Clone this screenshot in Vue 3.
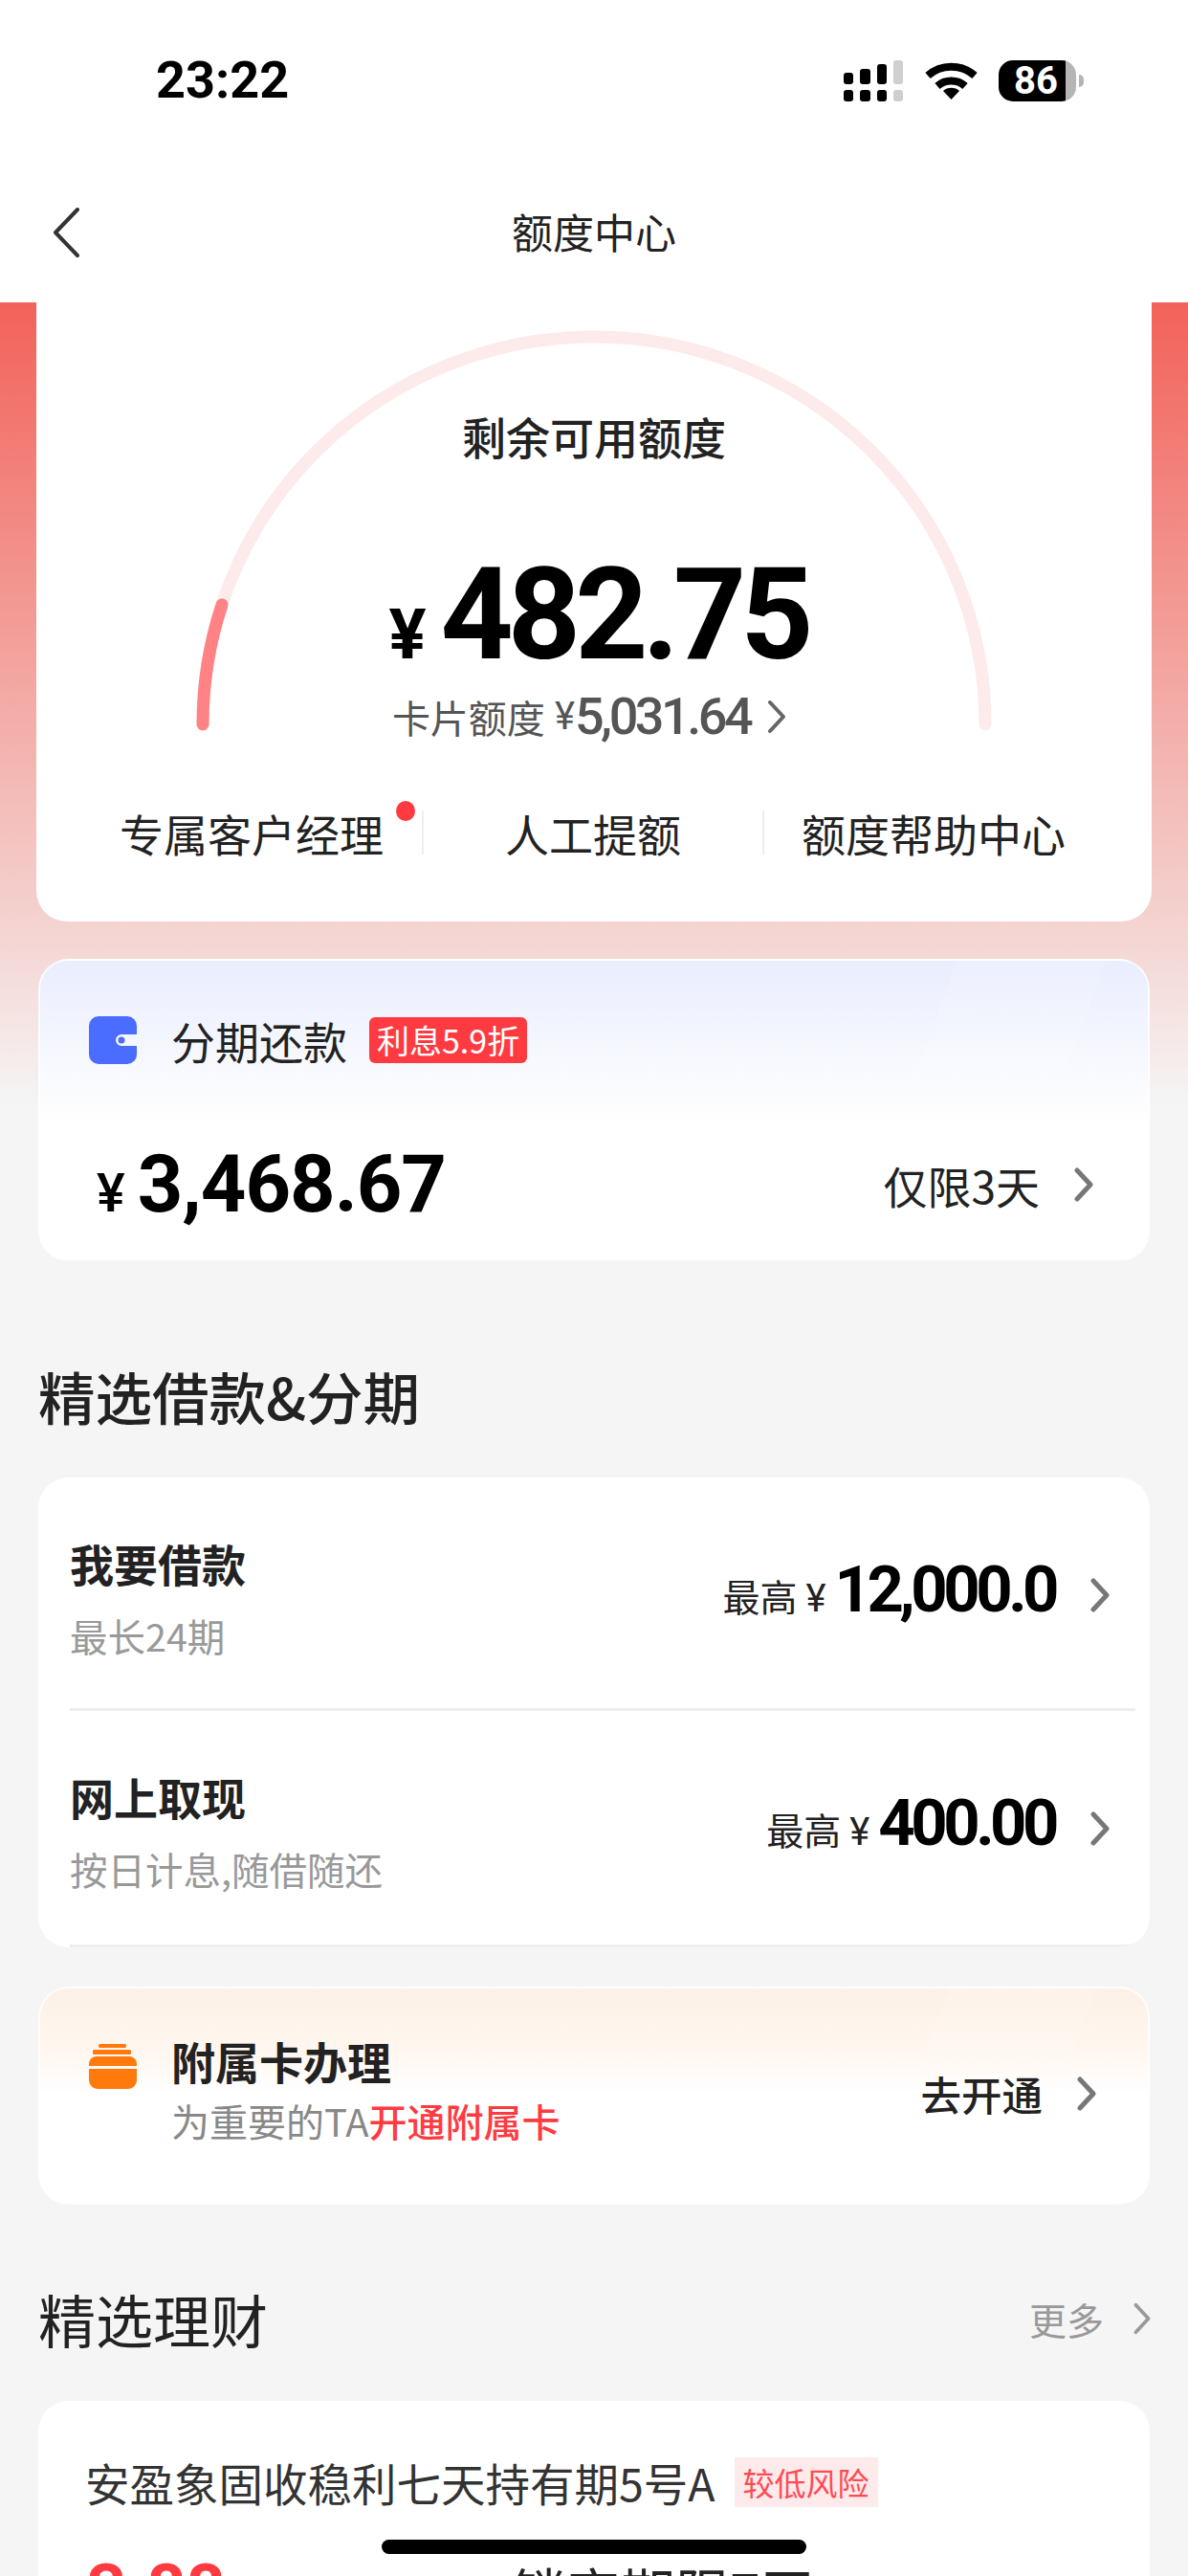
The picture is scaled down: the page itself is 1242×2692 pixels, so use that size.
<script setup>
const menu = [
  { label: '专属客户经理', dot: true },
  { label: '人工提额', dot: false },
  { label: '额度帮助中心', dot: false }
]
const loans = [
  { title: '我要借款', sub: '最长24期', amount: '12,000.0' },
  { title: '网上取现', sub: '按日计息,随借随还', amount: '400.00' }
]
</script>

<template>
  <div class="page">
    <header class="top">
      <div class="status">
        <span class="time">23:22</span>
        <div class="status-icons">
          <svg class="signal" viewBox="0 0 62 43">
            <rect x="0" y="13" width="10" height="12" rx="3" />
            <rect x="17" y="9" width="11" height="16" rx="3" />
            <rect x="35" y="4" width="10" height="21" rx="3" />
            <rect class="dim" x="52" y="0" width="10" height="25" rx="3" />
            <rect x="0" y="31" width="10" height="12" rx="3" />
            <rect x="17" y="31" width="11" height="12" rx="3" />
            <rect x="35" y="31" width="10" height="12" rx="3" />
            <rect class="dim" x="52" y="31" width="10" height="12" rx="3" />
          </svg>
          <svg class="wifi" viewBox="0 0 55 40">
            <path class="wave" d="M3 15 A37 37 0 0 1 52 15" />
            <path class="wave" d="M13 26 A22 22 0 0 1 42 26" />
            <path d="M19 31 A13 13 0 0 1 36 31 L27.5 40 Z" />
          </svg>
          <div class="battery"><span>86</span></div>
        </div>
      </div>
      <div class="nav">
        <svg class="back" viewBox="0 0 28 52"><path d="M26 2 L3 26 L26 50" /></svg>
        <h1>额度中心</h1>
      </div>
    </header>

    <main class="main">
      <section class="credit">
        <svg class="gauge" viewBox="0 0 1166 460">
          <path class="track" d="M174 441 A409 405 0 0 1 992 441" />
          <path class="progress" d="M174 441 A409 405 0 0 1 194 316" />
        </svg>
        <h2 class="credit-title">剩余可用额度</h2>
        <div class="credit-amount"><span class="yen">¥</span><span class="num">482.75</span></div>
        <div class="credit-limit">
          <span>卡片额度</span><span class="limit-yen">¥</span><span class="limit-num">5,031.64</span>
          <svg class="chev limit-chev" viewBox="0 0 20 36"><path d="M3 3 L17 18 L3 33" /></svg>
        </div>
        <nav class="menu">
          <div v-for="item in menu" :key="item.label" class="menu-item">
            <span class="menu-label">{{ item.label }}<i v-if="item.dot" class="dot"></i></span>
          </div>
        </nav>
      </section>

      <section class="promo promo-blue">
        <div class="promo-head">
          <svg class="promo-icon" viewBox="0 0 50 50">
            <path class="wallet" d="M10 0H40A10 10 0 0 1 50 10V19H34A6 6 0 0 0 34 31H50V40A10 10 0 0 1 40 50H10A10 10 0 0 1 0 40V10A10 10 0 0 1 10 0Z" />
            <circle class="wallet" cx="34" cy="25" r="3.5" />
          </svg>
          <span class="promo-name">分期还款</span>
          <span class="promo-tag">利息5.9折</span>
        </div>
        <div class="promo-foot">
          <div class="promo-amount"><span class="promo-yen">¥</span><span class="promo-num">3,468.67</span></div>
          <div class="promo-limit">
            <span>仅限3天</span>
            <svg class="chev row-chev" viewBox="0 0 20 36"><path d="M3 3 L17 18 L3 33" /></svg>
          </div>
        </div>
      </section>

      <h2 class="section-title section-bold">精选借款&amp;分期</h2>

      <section class="loans">
        <div v-for="loan in loans" :key="loan.title" class="loan">
          <div class="loan-text">
            <div class="loan-title">{{ loan.title }}</div>
            <div class="loan-sub">{{ loan.sub }}</div>
          </div>
          <div class="loan-right">
            <span class="loan-label">最高</span><span class="loan-yen">¥</span><span class="loan-num">{{ loan.amount }}</span>
            <svg class="chev row-chev loan-chev" viewBox="0 0 20 36"><path d="M3 3 L17 18 L3 33" /></svg>
          </div>
        </div>
      </section>

      <section class="promo promo-orange">
        <svg class="promo-icon jar" viewBox="0 0 50 47">
          <rect x="10" y="0" width="29" height="4" rx="1.5" />
          <rect x="4" y="6" width="40" height="5" rx="1.5" />
          <path d="M8 13H42A8 8 0 0 1 50 21V23H0V21A8 8 0 0 1 8 13Z" />
          <path d="M0 26H50V38A9 9 0 0 1 41 47H9A9 9 0 0 1 0 38Z" />
        </svg>
        <div class="card-text">
          <div class="card-title">附属卡办理</div>
          <div class="card-sub">为重要的TA<b>开通附属卡</b></div>
        </div>
        <div class="card-action">
          <span>去开通</span>
          <svg class="chev row-chev" viewBox="0 0 20 36"><path d="M3 3 L17 18 L3 33" /></svg>
        </div>
      </section>

      <div class="section-head">
        <h2 class="section-title">精选理财</h2>
        <div class="more">
          <span>更多</span>
          <svg class="chev more-chev" viewBox="0 0 20 36"><path d="M3 3 L17 18 L3 33" /></svg>
        </div>
      </div>

      <section class="product">
        <div class="product-head">
          <span class="product-name">安盈象固收稳利七天持有期5号A</span>
          <span class="risk">较低风险</span>
        </div>
        <div class="product-foot">
          <div class="rate">3.88<small>%</small></div>
          <div class="term">锁定期限7天</div>
        </div>
      </section>
    </main>

    <div class="home-bar"></div>
  </div>
</template>

<style>
html, body { margin: 0; padding: 0; background: #f5f5f5; }
</style>

<style scoped>
* { box-sizing: border-box; }
h1, h2 { margin: 0; font-weight: inherit; font-size: inherit; }

.page {
  position: relative;
  width: 1242px;
  height: 2692px;
  overflow: hidden;
  background: #f5f5f5;
  color: #222;
  font-family: "Noto Sans CJK SC", Roboto, sans-serif;
}

/* top bars */
.top { background: #fff; height: 316px; }
.status {
  height: 168px;
  padding: 0 117px 0 163px;
  display: flex;
  align-items: center;
  justify-content: space-between;
}
.time { font: 700 54px/60px Roboto, sans-serif; color: #000; }
.status-icons { display: flex; align-items: center; }
.signal { width: 62px; height: 43px; fill: #000; }
.signal .dim { fill: #cfcfcf; }
.wifi { width: 55px; height: 40px; margin-left: 23px; fill: #000; }
.wifi .wave { fill: none; stroke: #000; stroke-width: 8; }
.battery {
  position: relative;
  width: 81px;
  height: 43px;
  margin-left: 22px;
  border-radius: 15px;
  background: linear-gradient(90deg, #000 86.5%, #b5b5b5 86.5%);
  color: #fff;
  font: 700 40px/43px Roboto, sans-serif;
  padding-left: 16px;
}
.battery::after {
  content: "";
  position: absolute;
  right: -8px;
  top: 15px;
  width: 5px;
  height: 13px;
  border-radius: 0 6px 6px 0;
  background: #b5b5b5;
}
.nav {
  position: relative;
  height: 148px;
  padding-bottom: 3px;
  display: flex;
  align-items: center;
  justify-content: center;
}
.nav h1 { font-size: 43px; line-height: 60px; color: #222; }
.back {
  position: absolute;
  left: 55px;
  top: 49px;
  width: 28px;
  height: 52px;
  fill: none;
  stroke: #333;
  stroke-width: 4;
  stroke-linecap: round;
  stroke-linejoin: round;
}

/* main column */
.main {
  padding: 0 40px;
  background: linear-gradient(180deg, #f2625a 0, #f4d3d0 650px, #f5f5f5 840px);
}

/* credit card */
.credit {
  position: relative;
  margin: 0 -2px;
  height: 647px;
  background: #fff;
  border-radius: 0 0 32px 32px;
  display: flex;
  flex-direction: column;
  align-items: center;
  padding-top: 109px;
}
.gauge {
  position: absolute;
  left: 0;
  top: 0;
  width: 1166px;
  height: 460px;
  fill: none;
  stroke-width: 13;
  stroke-linecap: round;
}
.gauge .track { stroke: #fdeaea; }
.gauge .progress { stroke: #ff8285; }
.credit-title {
  position: relative;
  font-size: 46px;
  line-height: 60px;
  font-weight: 500;
  color: #222;
}
.credit-amount {
  position: relative;
  margin-top: 93px;
  padding-left: 9px;
  height: 130px;
  display: flex;
  align-items: baseline;
  color: #000;
  font-family: Roboto, sans-serif;
  font-weight: 700;
  line-height: 130px;
}
.yen { font-size: 73px; margin-right: 15px; }
.num { font-size: 133px; letter-spacing: -6px; }
.credit-limit {
  position: relative;
  margin-top: 11px;
  padding-right: 10px;
  height: 60px;
  display: flex;
  align-items: center;
  font-size: 40px;
  color: #555;
}
.limit-yen { font: 400 40px/60px Roboto, sans-serif; margin-left: 10px; }
.limit-num { font: 500 54px/60px Roboto, sans-serif; letter-spacing: -3.5px; }
.limit-chev { width: 20px; height: 36px; margin-left: 18px; stroke: #666; stroke-width: 5; }

.menu {
  position: absolute;
  left: 47px;
  top: 531px;
  display: flex;
}
.menu-item {
  width: 356px;
  height: 46px;
  display: flex;
  align-items: center;
  justify-content: center;
  font-size: 46px;
  line-height: 46px;
  color: #222;
}
.menu-item + .menu-item { border-left: 2px solid #eee; }
.menu-label { position: relative; }
.dot {
  position: absolute;
  right: -33px;
  top: -10px;
  width: 20px;
  height: 21px;
  border-radius: 50%;
  background: #ff3b41;
}

/* chevrons */
.chev {
  flex: none;
  fill: none;
  stroke-width: 4;
  stroke-linecap: round;
  stroke-linejoin: round;
}
.row-chev { width: 20px; height: 36px; stroke: #777; stroke-width: 5; }
.more-chev { width: 20px; height: 34px; stroke: #999; }

/* promo cards */
.promo {
  border: 2px solid rgba(255, 255, 255, 0.75);
  border-radius: 32px;
}
.promo-blue {
  margin-top: 39px;
  height: 316px;
  padding: 58px 57px 0 51px;
  background:
    linear-gradient(110deg, transparent 80%, rgba(255, 255, 255, 0.12) 80% 93%, transparent 93%) top / 100% 110px no-repeat,
    linear-gradient(180deg, #e9edfe 0, #f5f7fe 90px, #fff 170px);
}
.promo-head { display: flex; align-items: center; height: 50px; }
.promo-icon { flex: none; width: 50px; height: 50px; }
.wallet { fill: #4a6cff; }
.promo-name { margin-left: 36px; font-size: 46px; line-height: 50px; color: #222; }
.promo-tag {
  margin-left: 23px;
  height: 48px;
  padding: 0 8px;
  border-radius: 6px;
  background: #ff3b41;
  color: #fff;
  font-size: 34px;
  line-height: 48px;
}
.promo-foot {
  margin-top: 100px;
  height: 60px;
  display: flex;
  align-items: center;
  justify-content: space-between;
}
.promo-amount {
  display: flex;
  align-items: baseline;
  color: #000;
  font-family: Roboto, sans-serif;
  font-weight: 700;
  line-height: 60px;
  padding-left: 8px;
}
.promo-yen { font-size: 56px; margin-right: 13px; font-weight: 500; }
.promo-num { font-size: 83px; letter-spacing: -1px; }
.promo-limit {
  display: flex;
  align-items: center;
  gap: 36px;
  margin-top: -8px;
  font-size: 46px;
  line-height: 60px;
  color: #222;
}

/* section titles */
.section-title { font-size: 60px; line-height: 80px; color: #222; }
.section-bold { margin-top: 100px; font-size: 59.5px; font-weight: 500; }

/* loans */
.loans {
  margin-top: 46px;
  height: 491px;
  border-radius: 32px;
  background: #fff;
  overflow: hidden;
}
.loan {
  margin-left: 33px;
  margin-right: 15px;
  padding-right: 27px;
  height: 244px;
  display: flex;
  justify-content: space-between;
  border-bottom: 3px solid #eee;
}
.loan + .loan { height: 247px; }
.loan-text { padding-top: 59px; }
.loan-title { font-size: 46px; line-height: 60px; font-weight: 700; color: #222; }
.loan-sub { margin-top: 21px; font-size: 39.5px; line-height: 50px; color: #999; }
.loan-right {
  padding-top: 87px;
  height: 158px;
  display: flex;
  align-items: baseline;
  color: #222;
}
.loan-label { font-size: 39px; line-height: 60px; }
.loan-yen { margin: 0 9px; font: 400 40px/60px Roboto, sans-serif; }
.loan-num {
  font: 700 67px/60px Roboto, sans-serif;
  letter-spacing: -4.5px;
  color: #000;
}
.loan-chev { margin-left: 37px; align-self: center; }

/* supplementary card */
.promo-orange {
  margin-top: 41px;
  height: 228px;
  padding: 0 54px 0 51px;
  display: flex;
  align-items: flex-start;
  background:
    linear-gradient(110deg, transparent 80%, rgba(255, 255, 255, 0.12) 80% 93%, transparent 93%) top / 100% 80px no-repeat,
    linear-gradient(180deg, #fdf1e6 0, #fff7f0 70px, #fff 110px);
}
.jar { height: 47px; margin-top: 58px; fill: #ff7a0d; }
.card-text { margin-left: 36px; padding-top: 45px; flex: 1; }
.card-title { font-size: 46px; line-height: 60px; font-weight: 700; color: #222; }
.card-sub { margin-top: 8px; font-size: 40px; line-height: 50px; color: #888; }
.card-sub b { color: #ff3b41; font-weight: 500; }
.card-action {
  margin-top: 80px;
  display: flex;
  align-items: center;
  gap: 36px;
  font-size: 42.5px;
  line-height: 60px;
  font-weight: 500;
  color: #222;
}

/* wealth */
.section-head {
  margin: 79px -2px 0 0;
  display: flex;
  align-items: center;
  justify-content: space-between;
}
.more { display: flex; align-items: center; gap: 30px; font-size: 39px; line-height: 50px; color: #999; }
.product {
  margin-top: 46px;
  height: 400px;
  padding: 55px 49px 0;
  border-radius: 32px;
  background: #fff;
}
.product-head { display: flex; align-items: center; height: 60px; }
.product-name { font-size: 46.5px; line-height: 60px; color: #333; }
.risk {
  margin-left: 20px;
  width: 150px;
  height: 52px;
  background: #fdeaea;
  color: #ff4a55;
  font-size: 33px;
  line-height: 52px;
  text-align: center;
}
.product-foot { position: relative; margin-top: 43px; display: flex; }
.rate {
  width: 446px;
  padding-left: 2px;
  font: 700 72px/80px Roboto, sans-serif;
  color: #ff3b41;
}
.rate small { font-size: 50px; font-weight: 400; }
.term { font-size: 57px; line-height: 80px; color: #222; }

.home-bar {
  position: absolute;
  left: 399px;
  top: 2654px;
  width: 444px;
  height: 15px;
  border-radius: 8px;
  background: #000;
}
</style>
